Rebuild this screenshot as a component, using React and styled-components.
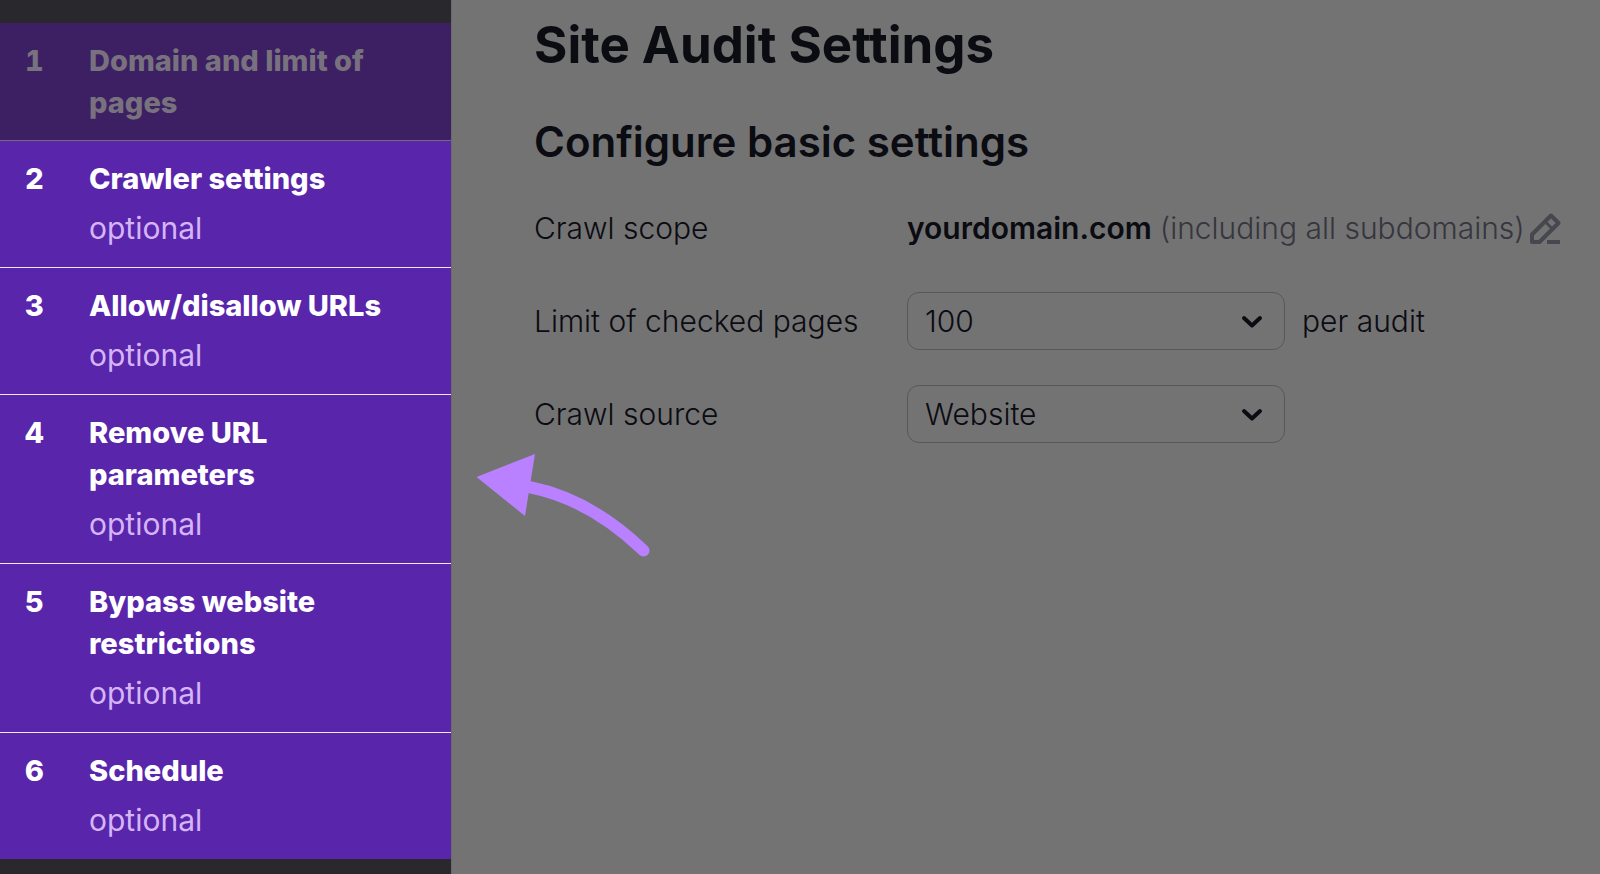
import React, { useState } from 'react';
import styled, { createGlobalStyle } from 'styled-components';

const GlobalStyle = createGlobalStyle`
  * {
    box-sizing: border-box;
  }
  body {
    margin: 0;
    background-color: #737373;
    font-family: Inter, "Liberation Sans", sans-serif;
    font-optical-sizing: none;
  }
`;

const Page = styled.div`
  display: flex;
  align-items: stretch;
  min-height: 100vh;
`;

const Sidebar = styled.nav`
  flex: 0 0 452px;
  padding-top: 23px;
  background-color: #29282d;
  border-right: 1px solid #6b6b6e;
`;

const StepList = styled.ol`
  margin: 0;
  padding: 0;
  list-style: none;
`;

const Step = styled.li`
  border-bottom: 1px solid ${(props) => (props.$dimmed ? '#75687f' : '#f0e4ff')};
  &:last-child {
    border-bottom: none;
  }
`;

const StepLink = styled.a`
  display: grid;
  grid-template-columns: 64px 1fr;
  padding: 17px 64px 16px 25px;
  color: ${(props) => (props.$dimmed ? '#78727e' : '#ffffff')};
  background-color: ${(props) => (props.$dimmed ? '#3d2063' : '#5925ab')};
  font-size: 29px;
  font-weight: 800;
  line-height: 42px;
  text-decoration: none;
`;

const StepNumber = styled.span`
  font-variant-numeric: tabular-nums;
`;

const StepTitle = styled.span`
  display: block;
`;

const StepNote = styled.span`
  display: block;
  margin-top: 5px;
  color: #d5b5f8;
  font-size: 30px;
  font-weight: 400;
  line-height: 46px;
`;

const Main = styled.main`
  position: relative;
  flex: 1;
  padding: 14px 32px 32px 82px;
  color: #0b0b12;
`;

const Title = styled.h1`
  margin: 0;
  font-size: 51px;
  font-weight: 700;
  line-height: 62px;
`;

const Subtitle = styled.h2`
  margin: 40px 0 31px;
  font-size: 42px;
  font-weight: 600;
  line-height: 52px;
`;

const Form = styled.form`
  display: flex;
  flex-direction: column;
  gap: 35px;
  font-size: 30px;
  font-weight: 300;
  white-space: nowrap;
`;

const Row = styled.div`
  display: grid;
  grid-template-columns: 373px 1fr;
  align-items: center;
  min-height: 58px;
`;

const Value = styled.div`
  display: flex;
  align-items: center;
`;

const Domain = styled.strong`
  font-weight: 600;
  margin-right: 8px;
`;

const Scope = styled.span`
  color: #36363e;
`;

const EditButton = styled.button`
  display: flex;
  margin: 0 0 0 4px;
  padding: 0;
  border: none;
  background: none;
  color: #47474f;
  cursor: pointer;
`;

const SelectBox = styled.div`
  position: relative;
  width: 378px;
  margin-right: 17px;
`;

const Select = styled.select`
  display: block;
  width: 100%;
  height: 58px;
  padding: 0 56px 0 17px;
  appearance: none;
  border: 1px solid #58585c;
  border-radius: 12px;
  background: none;
  color: #0b0b12;
  font: inherit;
`;

const Chevron = styled.svg`
  position: absolute;
  top: 22px;
  right: 22px;
  pointer-events: none;
`;

const Arrow = styled.svg`
  position: absolute;
  top: 452px;
  left: 23px;
  pointer-events: none;
`;

const steps = [
  { title: 'Domain and limit of pages', dimmed: true },
  { title: 'Crawler settings', optional: true },
  { title: 'Allow/disallow URLs', optional: true },
  { title: 'Remove URL parameters', optional: true },
  { title: 'Bypass website restrictions', optional: true },
  { title: 'Schedule', optional: true },
];

function SelectField({ id, value, onChange, options }) {
  return (
    <SelectBox>
      <Select id={id} value={value} onChange={(e) => onChange(e.target.value)}>
        {options.map((option) => (
          <option key={option}>{option}</option>
        ))}
      </Select>
      <Chevron width="22" height="16" viewBox="0 0 22 16" fill="none">
        <path d="M3 4L11 11.5L19 4" stroke="#0b0b12" strokeWidth="4" strokeLinecap="round" strokeLinejoin="round" />
      </Chevron>
    </SelectBox>
  );
}

function App() {
  const [limit, setLimit] = useState('100');
  const [source, setSource] = useState('Website');

  return (
    <>
      <GlobalStyle />
      <Page>
        <Sidebar>
          <StepList>
            {steps.map((step, index) => (
              <Step key={step.title} $dimmed={step.dimmed}>
                <StepLink href="#" $dimmed={step.dimmed}>
                  <StepNumber>{index + 1}</StepNumber>
                  <div>
                    <StepTitle>{step.title}</StepTitle>
                    {step.optional && <StepNote>optional</StepNote>}
                  </div>
                </StepLink>
              </Step>
            ))}
          </StepList>
        </Sidebar>

        <Main>
          <Title>Site Audit Settings</Title>
          <Subtitle>Configure basic settings</Subtitle>
          <Form>
            <Row>
              <span>Crawl scope</span>
              <Value>
                <Domain>yourdomain.com</Domain>
                <Scope>(including all subdomains)</Scope>
                <EditButton type="button" aria-label="Edit crawl scope">
                  <svg width="34" height="34" viewBox="0 0 34 34" fill="none" stroke="currentColor" strokeWidth="4">
                    <path d="M3 31V23.5L22 4.5L29.5 12L10.5 31Z" strokeLinejoin="round" />
                    <path d="M16 10.5L23.5 18" strokeWidth="3" />
                    <path d="M18 31H31" />
                  </svg>
                </EditButton>
              </Value>
            </Row>
            <Row>
              <label htmlFor="limit">Limit of checked pages</label>
              <Value>
                <SelectField id="limit" value={limit} onChange={setLimit} options={['100', '500', '1000']} />
                <span>per audit</span>
              </Value>
            </Row>
            <Row>
              <label htmlFor="source">Crawl source</label>
              <Value>
                <SelectField id="source" value={source} onChange={setSource} options={['Website', 'Sitemap']} />
              </Value>
            </Row>
          </Form>

          <Arrow width="176" height="110" viewBox="0 0 176 110" fill="none">
            <path d="M1.5 25L60 2L50 64Z" fill="#b980ff" />
            <path d="M54 35Q115 47 168.5 98.5" stroke="#b980ff" strokeWidth="12" strokeLinecap="round" />
          </Arrow>
        </Main>
      </Page>
    </>
  );
}

export default App;
